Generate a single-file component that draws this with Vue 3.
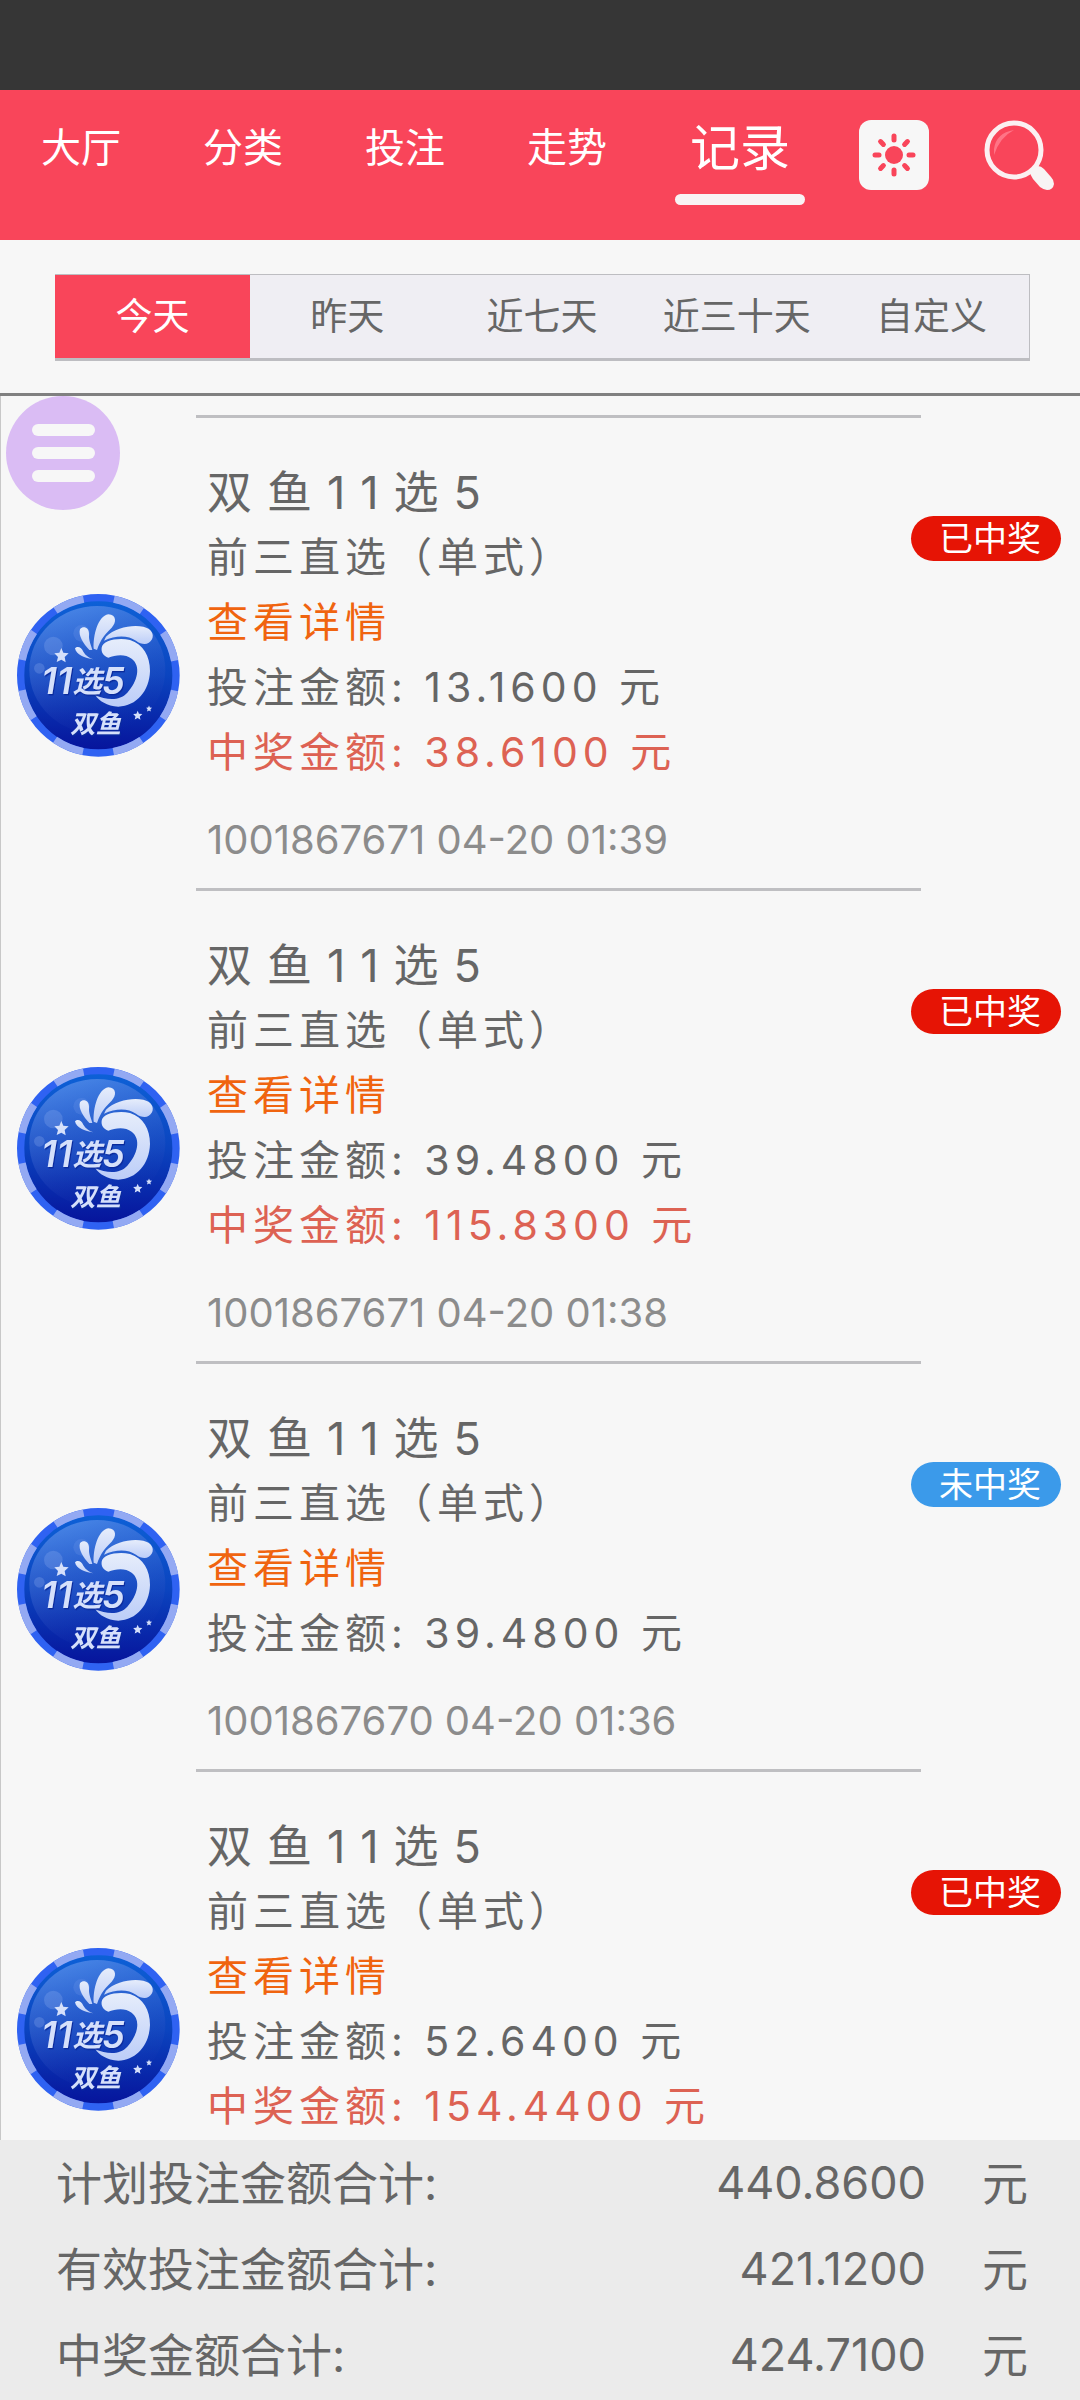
<script setup>
import { ref } from 'vue'

const sections = ['大厅', '分类', '投注', '走势', '记录']
const activeSection = ref('记录')

const ranges = ['今天', '昨天', '近七天', '近三十天', '自定义']
const activeRange = ref('今天')

const records = [
  { bet: '13.1600', win: '38.6100', meta: '1001867671 04-20 01:39' },
  { bet: '39.4800', win: '115.8300', meta: '1001867671 04-20 01:38' },
  { bet: '39.4800', win: '', meta: '1001867670 04-20 01:36' },
  { bet: '52.6400', win: '154.4400', meta: '' }
]

const totals = [
  { label: '计划投注金额合计:', value: '440.8600' },
  { label: '有效投注金额合计:', value: '421.1200' },
  { label: '中奖金额合计:', value: '424.7100' }
]

const rays = [0, 45, 90, 135, 180, 225, 270, 315]
</script>

<template>
  <div class="app">
    <svg class="defs" width="0" height="0" aria-hidden="true">
      <defs>
        <linearGradient id="face" x1="0" y1="0" x2="0" y2="1">
          <stop offset="0" stop-color="#0d62d8" />
          <stop offset="0.5" stop-color="#0b44bf" />
          <stop offset="1" stop-color="#06129a" />
        </linearGradient>
        <linearGradient id="shine" x1="0.25" y1="0" x2="0.6" y2="1">
          <stop offset="0" stop-color="#6b9cf0" stop-opacity="0.65" />
          <stop offset="0.5" stop-color="#4a6ed4" stop-opacity="0.35" />
          <stop offset="1" stop-color="#2038b0" stop-opacity="0" />
        </linearGradient>
        <linearGradient id="splash" x1="0" y1="0" x2="0" y2="1">
          <stop offset="0" stop-color="#e6edfb" />
          <stop offset="1" stop-color="#bccdf8" />
        </linearGradient>
        <path id="star" d="M0-22 6-8 22-6 10 5 13 21 0 13-14 20-10 5-21-6-6-8Z" />
      </defs>
    </svg>

    <div class="status-bar"></div>

    <header class="top-bar">
      <nav class="sections">
        <a
          v-for="name in sections"
          :key="name"
          href="#"
          class="section"
          :class="{ active: name === activeSection }"
          @click.prevent="activeSection = name"
        >{{ name }}</a>
      </nav>
      <button class="icon-button" type="button" aria-label="主题">
        <svg viewBox="0 0 70 70" width="70" height="70">
          <rect width="70" height="70" rx="12" fill="#f7f7f7" />
          <circle cx="35" cy="35" r="9" fill="#f9455a" />
          <line
            v-for="angle in rays"
            :key="angle"
            x1="35" y1="16" x2="35" y2="20"
            stroke="#f9455a" stroke-width="5" stroke-linecap="round"
            :transform="`rotate(${angle} 35 35)`"
          />
        </svg>
      </button>
      <button class="icon-button" type="button" aria-label="搜索">
        <svg viewBox="0 0 70 70" width="70" height="70">
          <circle cx="30" cy="30" r="27" fill="none" stroke="#fbf0f2" stroke-width="5" />
          <path d="M10 29Q12 13 30 10Q16 17 10 35Z" fill="#ff7486" />
          <path d="M46 51Q47 47 54 46Q57 46 60 49L67 57Q70 60 70 64Q69 70 63 70Q60 70 56 67L49 59Q46 55 46 51Z" fill="#f8f4f4" />
        </svg>
      </button>
    </header>

    <div class="ranges">
      <div class="range-group">
        <button
          v-for="name in ranges"
          :key="name"
          type="button"
          class="range"
          :class="{ active: name === activeRange }"
          @click="activeRange = name"
        >{{ name }}</button>
      </div>
    </div>

    <main class="list">
      <button class="menu" type="button" aria-label="菜单">
        <span></span><span></span><span></span>
      </button>
      <article v-for="(record, i) in records" :key="i" class="record">
        <div class="logo">
          <svg viewBox="51 44 489 489" width="163" height="163">
            <circle cx="295" cy="288" r="233" fill="url(#face)" stroke="#2f62f2" stroke-width="22" />
            <circle cx="295" cy="288" r="233" fill="none" stroke="#93a9f3" stroke-width="22" pathLength="16" stroke-dasharray="1 1" stroke-dashoffset="-0.5" />
            <ellipse cx="292" cy="272" rx="204" ry="192" fill="url(#shine)" />
            <circle cx="160" cy="200" r="28" fill="#9bb8f5" opacity="0.25" />
            <circle cx="118" cy="267" r="16" fill="#9bb8f5" opacity="0.25" />
            <circle cx="245" cy="162" r="25" fill="#9bb8f5" opacity="0.15" />
            <g fill="url(#splash)">
              <path d="M318 172C345 145 395 135 430 142C455 148 463 165 456 180C446 199 425 197 408 184C385 168 350 166 312 184Z" />
              <path d="M281 208C279 170 293 110 325 105C350 106 350 130 335 145C317 162 301 180 291 212Z" />
              <path d="M268 212C250 194 234 168 240 150C250 138 268 145 267 165C266 185 273 197 277 212Z" />
              <path d="M280 240C255 238 228 225 225 207C233 198 245 205 250 217C257 229 268 236 280 240Z" />
              <path d="M305 205C308 185 350 174 390 182C430 195 450 230 450 275C448 335 410 380 355 382C320 380 298 365 285 347C320 362 358 366 382 340C413 306 424 260 395 238C375 222 345 227 325 235C310 230 303 218 305 205Z" />
            </g>
            <g class="chip-text">
              <text x="124" y="343" font-size="110">11<tspan font-size="88" dy="-6">选</tspan><tspan dy="6">5</tspan></text>
              <text x="211" y="461" font-size="76">双鱼</text>
            </g>
            <g fill="#d5e0fb">
              <use href="#star" transform="translate(184 228)" />
              <use href="#star" transform="translate(413 408) scale(.64)" />
              <use href="#star" transform="translate(447 388) scale(.42)" />
            </g>
          </svg>
        </div>
        <div class="body">
          <h2 class="title">双鱼11选5</h2>
          <p class="line">前三直选（单式）</p>
          <a href="#" class="line detail" @click.prevent>查看详情</a>
          <p class="line">投注金额: {{ record.bet }} 元</p>
          <p v-if="record.win" class="line win">中奖金额: {{ record.win }} 元</p>
          <p class="meta">{{ record.meta }}</p>
        </div>
        <div class="state">
          <span class="badge" :class="{ lost: !record.win }">{{ record.win ? '已中奖' : '未中奖' }}</span>
        </div>
      </article>
    </main>

    <footer class="totals">
      <dl v-for="row in totals" :key="row.label" class="total">
        <dt>{{ row.label }}</dt>
        <dd class="value">{{ row.value }}</dd>
        <dd class="unit">元</dd>
      </dl>
    </footer>
  </div>
</template>

<style>
body {
  margin: 0;
}
</style>

<style scoped>
.app {
  display: flex;
  flex-direction: column;
  height: 100vh;
  overflow: hidden;
  background: #f7f7f7;
  color: #666;
  font-family: Inter, "Noto Sans CJK SC", sans-serif;
}

button {
  padding: 0;
  border: 0;
  background: none;
  color: inherit;
  font: inherit;
}

a {
  color: inherit;
  text-decoration: none;
}

h2,
p,
dl,
dd {
  margin: 0;
  font-weight: 400;
}

.defs {
  position: absolute;
}

.status-bar {
  flex: none;
  height: 90px;
  background: #363636;
}

.top-bar {
  display: flex;
  flex: none;
  align-items: flex-start;
  gap: 55px;
  height: 120px;
  padding: 30px 26px 0 0;
  background: #f9455a;
  color: #fff;
}

.sections {
  display: flex;
  flex: 1;
  margin-right: -28px;
}

.section {
  flex: 162;
  font-size: 40px;
  line-height: 56px;
  text-align: center;
}

.section.active {
  flex: 184;
  font-size: 50px;
}

.section.active::after {
  content: "";
  display: block;
  width: 130px;
  height: 11px;
  margin: 18px auto 0;
  border-radius: 6px;
  background: #f9f3f4;
}

.icon-button,
.icon-button svg {
  display: block;
}

.ranges {
  flex: none;
  padding: 34px 50px 32px 55px;
  border-bottom: 3px solid #808080;
}

.range-group {
  display: flex;
  border: 1px solid #bdbdc1;
  border-bottom-width: 3px;
  border-left: 0;
  background: #efeef3;
}

.range {
  flex: 1;
  font-size: 37px;
  line-height: 83px;
}

.range.active {
  background: #f9455a;
  color: #fff;
}

.list {
  position: relative;
  flex: 1;
  min-height: 0;
  padding-top: 19px;
  border-left: 1px solid #c8c8c8;
  overflow: hidden;
}

.menu {
  position: absolute;
  top: 0;
  left: 5px;
  display: flex;
  flex-direction: column;
  align-items: center;
  justify-content: center;
  gap: 11px;
  width: 114px;
  height: 114px;
  border-radius: 50%;
  background: #dabcf4;
}

.menu span {
  width: 63px;
  height: 12px;
  border-radius: 6px;
  background: #f7f7f7;
}

.record {
  display: grid;
  grid-template-columns: 195px 1fr 159px;
}

.logo {
  display: flex;
  align-items: center;
  padding: 48px 0 0 16px;
}

.logo svg {
  display: block;
}

.body {
  padding: 42px 0 16px 11px;
  border-top: 3px solid #bfbfc2;
}

.title {
  font-size: 45px;
  line-height: 65px;
  letter-spacing: 15px;
}

.line {
  display: block;
  font-size: 41px;
  line-height: 65px;
  letter-spacing: 5px;
}

.detail {
  color: #f0640f;
}

.win {
  color: #dd6253;
}

.meta {
  height: 65px;
  margin-top: 22px;
  color: #8c8c8c;
  font-size: 40px;
  line-height: 65px;
}

.state {
  display: flex;
  align-items: flex-start;
  justify-content: flex-end;
  padding: 101px 19px 0 0;
}

.badge {
  width: 122px;
  margin-left: -10px;
  padding-left: 28px;
  border-radius: 23px;
  background: #e61405;
  color: #fff;
  font-size: 34px;
  line-height: 45px;
  white-space: nowrap;
}

.badge.lost {
  background: #3b9aea;
}

.totals {
  flex: none;
  padding-bottom: 2px;
  background: #ebebeb;
}

.total {
  display: flex;
  padding: 0 52px 0 56px;
  font-size: 46px;
  line-height: 86px;
}

.value {
  flex: 1;
  font-size: 45px;
  text-align: right;
}

.unit {
  margin-left: 56px;
}

.chip-text {
  fill: #d5e0fb;
  font-family: Inter, "Noto Sans CJK SC", sans-serif;
  font-style: italic;
  font-weight: 600;
  filter: drop-shadow(3px 4px 2px #0a2a9c);
}
</style>
